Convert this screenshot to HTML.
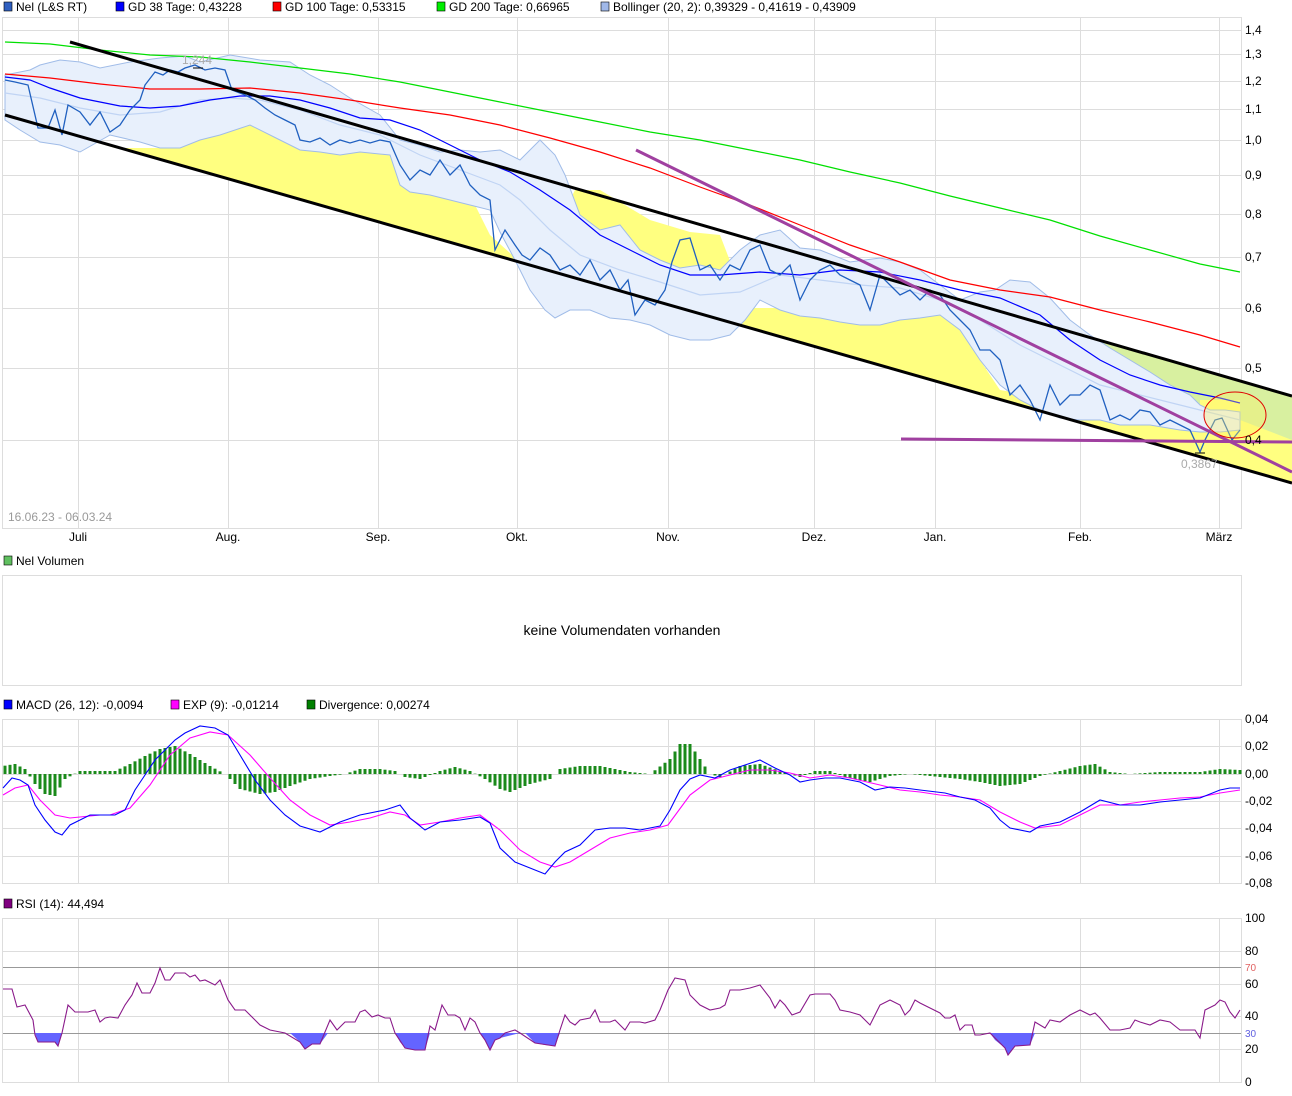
<!DOCTYPE html>
<html><head><meta charset="utf-8"><style>
body{margin:0;background:#fff;width:1292px;height:1096px;overflow:hidden;font-family:"Liberation Sans",sans-serif}
svg{display:block}
text{font-family:"Liberation Sans",sans-serif;font-size:12px;fill:#000}
</style></head><body>
<svg width="1292" height="1096" viewBox="0 0 1292 1096">
<g>
<rect x="4" y="2" width="8" height="9" fill="#3060c0" stroke="#000" stroke-width="0.6"/><text x="16" y="11">Nel (L&amp;S RT)</text>
<rect x="116" y="2" width="8" height="9" fill="#0000ff" stroke="#000" stroke-width="0.6"/><text x="128" y="11">GD 38 Tage: 0,43228</text>
<rect x="273" y="2" width="8" height="9" fill="#ff0000" stroke="#000" stroke-width="0.6"/><text x="285" y="11">GD 100 Tage: 0,53315</text>
<rect x="437" y="2" width="8" height="9" fill="#00ee00" stroke="#000" stroke-width="0.6"/><text x="449" y="11">GD 200 Tage: 0,66965</text>
<rect x="601" y="2" width="8" height="9" fill="#a0b8e8" stroke="#000" stroke-width="0.6"/><text x="613" y="11">Bollinger (20, 2): 0,39329 - 0,41619 - 0,43909</text>
</g>
<rect x="2.5" y="17.5" width="1239" height="511" fill="#fff" stroke="#ddd"/>
<g stroke="#ddd" stroke-width="1">
<line x1="3" x2="1241" y1="30.5" y2="30.5"/><line x1="3" x2="1241" y1="54.5" y2="54.5"/><line x1="3" x2="1241" y1="81.5" y2="81.5"/><line x1="3" x2="1241" y1="109.5" y2="109.5"/><line x1="3" x2="1241" y1="140.5" y2="140.5"/><line x1="3" x2="1241" y1="175.5" y2="175.5"/><line x1="3" x2="1241" y1="214.5" y2="214.5"/><line x1="3" x2="1241" y1="257.5" y2="257.5"/><line x1="3" x2="1241" y1="308.5" y2="308.5"/><line x1="3" x2="1241" y1="368.5" y2="368.5"/><line x1="3" x2="1241" y1="440.5" y2="440.5"/>
<line x1="78.5" x2="78.5" y1="18" y2="528"/><line x1="228.5" x2="228.5" y1="18" y2="528"/><line x1="378.5" x2="378.5" y1="18" y2="528"/><line x1="517.5" x2="517.5" y1="18" y2="528"/><line x1="668.5" x2="668.5" y1="18" y2="528"/><line x1="814.5" x2="814.5" y1="18" y2="528"/><line x1="935.5" x2="935.5" y1="18" y2="528"/><line x1="1080.5" x2="1080.5" y1="18" y2="528"/><line x1="1219.5" x2="1219.5" y1="18" y2="528"/>
</g>
<polygon points="1060,330 1292,396 1292,440 1240,440 1200,420 1150,390 1090,370" fill="#d8f0a0"/>
<polygon points="1240,440 1292,440 1292,475 1240,458" fill="#ffd8c0"/>
<polygon fill="#ffff80" points="115,148 180,148 210,120 240,105 262,105 300,140 390,148 410,178 470,195 490,235 520,262 560,220 575,190 600,190 650,220 690,232 720,235 745,300 748,308 930,308 960,330 1000,390 1060,400 1090,405 1110,420 1150,425 1200,430 1240,420 1292,440 1292,483 5,115"/>
<polygon points="1200,400 1240,400 1240,440 1200,440" fill="#ffff80"/>
<polygon fill="#e8f0fc" stroke="#a0bce8" stroke-width="1" points="5,75 30,70 40,65 60,60 80,62 100,68 130,62 160,58 185,56 200,62 230,55 260,60 290,62 310,75 330,85 350,98 380,115 400,140 420,145 440,152 460,150 480,152 500,150 520,160 540,140 555,155 565,175 580,215 600,230 620,225 640,250 660,260 680,268 700,265 720,270 740,250 760,235 780,230 800,248 820,250 850,262 880,258 900,262 920,270 940,285 960,300 980,292 995,290 1010,280 1030,282 1050,298 1070,320 1090,335 1110,348 1130,360 1150,372 1170,385 1190,395 1200,405 1210,410 1225,410 1240,412 1240,430 1220,432 1200,432 1180,430 1150,425 1120,425 1100,420 1080,420 1060,418 1040,410 1020,400 1000,385 980,360 960,330 940,315 920,318 900,320 880,325 860,325 840,322 820,318 800,316 780,310 760,300 745,320 730,335 710,340 690,340 670,335 650,325 630,320 610,318 590,310 570,310 555,318 545,310 530,290 515,260 500,232 490,210 470,205 450,200 430,195 410,192 400,185 390,155 360,152 340,155 320,152 300,150 280,140 250,125 220,135 200,140 180,148 160,148 140,142 110,135 80,152 60,145 40,142 20,130 5,120"/>
<polyline fill="none" stroke="#c0d4f4" stroke-width="1.2" points="5,93 40,98 80,108 120,115 160,112 200,100 230,98 260,100 300,110 340,125 380,135 420,155 460,170 500,185 520,200 550,230 580,255 620,270 660,282 700,295 740,292 780,275 820,280 860,285 900,288 940,300 980,320 1020,345 1060,365 1100,385 1140,395 1180,405 1240,420"/>
<polyline fill="none" stroke="#00e000" stroke-width="1.2" points="5,42 50,44 100,50 150,55 200,57 250,62 300,68 350,74 400,82 450,92 500,102 550,112 600,122 650,132 700,140 750,150 800,160 850,172 900,183 950,196 1000,208 1050,220 1100,236 1150,250 1200,264 1240,272"/>
<polyline fill="none" stroke="#ff0000" stroke-width="1.2" points="5,74 50,78 100,84 150,89 200,89 250,88 300,93 350,100 400,108 450,115 500,125 550,138 600,152 650,168 700,187 750,205 800,225 850,245 900,262 950,280 1000,290 1050,297 1100,310 1150,322 1200,335 1240,347"/>
<polyline fill="none" stroke="#0000ff" stroke-width="1.2" points="5,77 30,80 50,88 80,98 120,106 150,108 180,106 210,100 240,96 270,96 300,100 330,108 360,118 390,120 420,130 450,145 480,160 510,172 540,190 570,210 600,235 630,250 660,265 690,275 720,275 760,272 800,275 840,270 880,272 920,280 960,290 1000,298 1040,315 1070,340 1100,360 1130,375 1160,385 1190,392 1220,398 1240,403"/>
<polyline fill="none" stroke="#2060c0" stroke-width="1.3" points="5,80 15,82 28,85 38,128 48,128 55,110 62,135 68,105 80,112 90,125 100,112 110,132 120,125 130,110 140,100 145,85 155,72 163,75 170,70 178,72 185,68 195,65 205,70 215,68 225,70 232,90 245,95 255,100 265,108 275,115 285,120 295,125 300,140 310,142 320,138 330,145 340,140 350,143 360,140 370,143 380,140 390,142 400,165 410,180 420,170 430,175 440,160 450,175 460,165 470,185 480,195 490,200 495,250 505,230 515,245 522,255 530,260 540,248 550,255 560,270 570,265 580,275 590,260 600,280 610,270 620,290 628,280 635,315 645,300 655,305 665,290 672,262 680,240 690,238 700,270 710,265 720,280 730,265 740,270 750,250 760,245 770,270 780,275 790,265 800,300 810,280 820,270 830,265 840,275 850,280 860,285 870,310 880,275 890,285 900,295 910,290 920,300 930,290 940,295 950,310 960,320 970,330 980,350 990,350 1000,360 1010,395 1020,385 1030,400 1040,420 1050,385 1060,405 1070,395 1080,395 1090,385 1100,390 1110,420 1120,415 1130,420 1140,410 1150,412 1160,425 1170,420 1180,425 1190,430 1200,452 1205,440 1215,420 1222,418 1232,440 1240,430"/>
<line x1="70" y1="42" x2="1292" y2="396" stroke="#000" stroke-width="3"/>
<line x1="5" y1="115" x2="1292" y2="483" stroke="#000" stroke-width="3"/>
<line x1="636" y1="150" x2="1292" y2="472" stroke="#a040a0" stroke-width="3"/>
<line x1="901" y1="439" x2="1292" y2="442" stroke="#a040a0" stroke-width="3"/>
<ellipse cx="1235" cy="415" rx="31" ry="23" fill="rgba(255,240,100,0.35)" stroke="#e00000" stroke-width="1"/>
<text x="182" y="64" style="fill:#aaa">1,244</text>
<line x1="193" y1="68" x2="203" y2="68" stroke="#000"/>
<text x="1181" y="468" style="fill:#aaa">0,3867</text>
<line x1="1195" y1="453" x2="1205" y2="453" stroke="#000"/>
<text x="8" y="521" style="fill:#999">16.06.23 - 06.03.24</text>
<g>
<text x="1245" y="34">1,4</text><text x="1245" y="58">1,3</text><text x="1245" y="85">1,2</text><text x="1245" y="113">1,1</text><text x="1245" y="144">1,0</text><text x="1245" y="179">0,9</text><text x="1245" y="218">0,8</text><text x="1245" y="261">0,7</text><text x="1245" y="312">0,6</text><text x="1245" y="372">0,5</text><text x="1245" y="444">0,4</text>
</g>
<g text-anchor="middle">
<text x="78" y="541">Juli</text><text x="228" y="541">Aug.</text><text x="378" y="541">Sep.</text><text x="517" y="541">Okt.</text><text x="668" y="541">Nov.</text><text x="814" y="541">Dez.</text><text x="935" y="541">Jan.</text><text x="1080" y="541">Feb.</text><text x="1219" y="541">März</text>
</g>
<rect x="4" y="556" width="8" height="9" fill="#60c060" stroke="#000" stroke-width="0.6"/><text x="16" y="565">Nel Volumen</text>
<rect x="2.5" y="575.5" width="1239" height="110" fill="#fff" stroke="#ddd"/>
<text x="622" y="635" text-anchor="middle" style="font-size:14px">keine Volumendaten vorhanden</text>
<rect x="4" y="700" width="8" height="9" fill="#0000ff" stroke="#000" stroke-width="0.6"/><text x="16" y="709">MACD (26, 12): -0,0094</text>
<rect x="171" y="700" width="8" height="9" fill="#ff00ff" stroke="#000" stroke-width="0.6"/><text x="183" y="709">EXP (9): -0,01214</text>
<rect x="307" y="700" width="8" height="9" fill="#008000" stroke="#000" stroke-width="0.6"/><text x="319" y="709">Divergence: 0,00274</text>
<rect x="2.5" y="719.5" width="1239" height="164" fill="#fff" stroke="#ddd"/>
<g stroke="#ddd">
<line x1="3" x2="1241" y1="746.5" y2="746.5"/><line x1="3" x2="1241" y1="774.5" y2="774.5"/><line x1="3" x2="1241" y1="801.5" y2="801.5"/><line x1="3" x2="1241" y1="828.5" y2="828.5"/><line x1="3" x2="1241" y1="856.5" y2="856.5"/>
<line x1="78.5" x2="78.5" y1="720" y2="883"/><line x1="228.5" x2="228.5" y1="720" y2="883"/><line x1="378.5" x2="378.5" y1="720" y2="883"/><line x1="517.5" x2="517.5" y1="720" y2="883"/><line x1="668.5" x2="668.5" y1="720" y2="883"/><line x1="814.5" x2="814.5" y1="720" y2="883"/><line x1="935.5" x2="935.5" y1="720" y2="883"/><line x1="1080.5" x2="1080.5" y1="720" y2="883"/><line x1="1219.5" x2="1219.5" y1="720" y2="883"/>
</g>
<g id="hist" stroke="#1a8a1a" stroke-width="3"></g>
<polyline fill="none" stroke="#ff00ff" stroke-width="1.1" points="3,795 15,788 28,785 40,800 55,815 70,818 90,816 100,815 110,815 130,808 150,785 170,755 190,738 210,732 228,735 250,755 270,778 290,800 310,815 330,825 350,822 370,818 390,812 405,815 420,825 440,822 460,818 480,815 500,830 520,850 540,862 555,867 570,862 590,850 610,838 630,833 650,830 668,825 690,795 710,780 730,775 750,770 770,770 790,773 810,778 830,775 850,778 880,785 900,790 920,792 940,795 960,797 980,800 1000,812 1020,822 1035,828 1060,825 1080,815 1100,805 1120,805 1140,802 1160,800 1180,798 1200,797 1220,793 1240,790"/>
<polyline fill="none" stroke="#0000ff" stroke-width="1.1" points="3,788 12,778 20,780 28,785 35,805 45,820 55,832 62,835 70,825 80,820 90,815 100,815 115,815 125,810 135,790 145,775 155,760 165,750 175,740 185,733 200,726 215,728 228,735 240,755 255,780 270,800 285,815 300,826 320,832 340,822 360,815 385,810 400,805 410,818 425,830 440,822 460,820 480,817 490,823 500,848 515,862 530,868 545,874 555,862 565,852 580,845 595,830 610,828 625,828 640,830 660,826 670,810 680,790 690,779 700,775 715,778 730,770 745,765 760,760 775,768 790,775 800,782 810,780 825,778 840,778 860,782 875,790 890,787 905,788 920,790 945,793 960,797 975,800 990,808 1000,820 1010,828 1030,832 1040,826 1060,822 1080,812 1100,800 1120,805 1140,805 1160,802 1180,800 1200,798 1220,790 1230,788 1240,788"/>
<g>
<text x="1245" y="723">0,04</text><text x="1245" y="750">0,02</text><text x="1245" y="778">0,00</text><text x="1245" y="805">-0,02</text><text x="1245" y="832">-0,04</text><text x="1245" y="860">-0,06</text><text x="1245" y="887">-0,08</text>
</g>
<rect x="4" y="899" width="8" height="9" fill="#800080" stroke="#000" stroke-width="0.6"/><text x="16" y="908">RSI (14): 44,494</text>
<rect x="2.5" y="918.5" width="1239" height="164" fill="#fff" stroke="#ddd"/>
<g stroke="#ddd">
<line x1="3" x2="1241" y1="951.5" y2="951.5"/><line x1="3" x2="1241" y1="984.5" y2="984.5"/><line x1="3" x2="1241" y1="1016.5" y2="1016.5"/><line x1="3" x2="1241" y1="1049.5" y2="1049.5"/>
<line x1="78.5" x2="78.5" y1="919" y2="1082"/><line x1="228.5" x2="228.5" y1="919" y2="1082"/><line x1="378.5" x2="378.5" y1="919" y2="1082"/><line x1="517.5" x2="517.5" y1="919" y2="1082"/><line x1="668.5" x2="668.5" y1="919" y2="1082"/><line x1="814.5" x2="814.5" y1="919" y2="1082"/><line x1="935.5" x2="935.5" y1="919" y2="1082"/><line x1="1080.5" x2="1080.5" y1="919" y2="1082"/><line x1="1219.5" x2="1219.5" y1="919" y2="1082"/>
</g>
<line x1="3" x2="1241" y1="967.5" y2="967.5" stroke="#999"/>
<line x1="3" x2="1241" y1="1033.5" y2="1033.5" stroke="#999"/>
<g fill="#6464ff">
<polygon points="35,1033 38,1042 55,1042 58,1046 62,1033"/>
<polygon points="290,1033 300,1042 305,1049 312,1044 320,1044 328,1033"/>
<polygon points="395,1033 400,1042 405,1048 415,1050 425,1050 430,1033"/>
<polygon points="480,1033 485,1040 490,1050 495,1040 500,1038 520,1033"/>
<polygon points="525,1033 535,1043 545,1045 555,1046 560,1033"/>
<polygon points="990,1033 995,1040 1005,1048 1008,1055 1015,1046 1030,1045 1035,1033"/>
</g>
<polyline fill="none" stroke="#8a1a8a" stroke-width="1.1" points="3,989 12,989 17,1007 25,1005 33,1020 35,1035 38,1042 55,1042 58,1046 62,1033 68,1005 75,1012 88,1012 95,1010 100,1022 105,1018 110,1017 118,1018 125,1005 132,995 137,983 142,993 150,993 155,983 160,968 165,980 170,980 175,973 185,973 190,977 195,975 200,981 205,980 215,985 220,980 228,1000 235,1010 245,1010 255,1020 260,1025 270,1030 285,1033 300,1042 305,1049 312,1044 320,1044 330,1020 337,1030 345,1022 355,1022 360,1012 365,1010 372,1017 378,1015 385,1018 390,1018 395,1033 405,1048 415,1050 425,1050 430,1026 435,1030 442,1005 448,1015 455,1015 460,1018 465,1030 470,1018 475,1022 480,1033 485,1040 490,1050 495,1040 500,1038 505,1033 515,1030 520,1033 535,1043 555,1046 560,1030 565,1015 570,1022 575,1025 580,1020 590,1018 595,1010 600,1022 610,1022 615,1020 625,1030 630,1022 640,1022 645,1023 655,1020 660,1010 668,990 675,978 685,980 690,995 700,1005 710,1010 720,1008 725,1005 730,990 740,990 750,988 760,985 770,998 775,1008 780,1000 785,1005 792,1015 800,1012 810,995 815,994 830,994 835,1000 840,1010 850,1012 860,1015 870,1025 880,1005 890,1000 900,1005 905,1015 910,1010 915,1000 920,1003 930,1008 940,1013 945,1018 950,1018 955,1015 960,1030 965,1025 972,1025 975,1035 980,1035 990,1033 1005,1048 1008,1055 1015,1046 1030,1045 1035,1022 1045,1028 1050,1020 1060,1022 1070,1015 1080,1010 1090,1015 1095,1013 1100,1018 1110,1030 1120,1030 1130,1028 1135,1020 1140,1022 1150,1025 1160,1020 1170,1022 1180,1030 1190,1030 1195,1030 1200,1038 1205,1010 1215,1005 1220,1000 1225,1002 1230,1012 1235,1018 1240,1010"/>
<g>
<text x="1245" y="922">100</text><text x="1245" y="955">80</text><text x="1245" y="971" style="font-size:10px;fill:#e06060">70</text><text x="1245" y="988">60</text><text x="1245" y="1020">40</text><text x="1245" y="1037" style="font-size:10px;fill:#6060e0">30</text><text x="1245" y="1053">20</text><text x="1245" y="1086">0</text>
</g>
</svg>
<script>
(function(){
var k=[[3,8],[15,10],[25,5],[35,-10],[45,-20],[55,-22],[65,-5],[80,3],[100,3],[115,3],[130,10],[145,18],[160,25],[175,28],[190,20],[210,8],[225,0],[240,-15],[260,-20],[275,-18],[290,-12],[310,-5],[330,-2],[345,0],[360,5],[380,5],[395,3],[405,-3],[420,-5],[440,3],[455,7],[470,3],[485,-5],[500,-15],[510,-18],[530,-10],[550,-5],[560,5],[580,8],[600,8],[615,5],[630,2],[650,0],[670,15],[680,30],[690,30],[700,15],[710,0],[720,-3],[740,8],[760,10],[780,3],[800,-3],[815,3],[830,3],[845,-3],[870,-8],[890,-2],[910,0],[940,-3],[960,-5],[980,-8],[1000,-12],[1020,-10],[1040,-2],[1060,3],[1080,8],[1095,10],[1110,2],[1130,0],[1160,2],[1200,2],[1220,5],[1240,4]];
function f(x){for(var i=0;i<k.length-1;i++){if(x>=k[i][0]&&x<=k[i+1][0]){var t=(x-k[i][0])/(k[i+1][0]-k[i][0]);return k[i][1]+t*(k[i+1][1]-k[i][1]);}}return 4;}
var g=document.getElementById('hist');
for(var x=5;x<=1240;x+=5){var v=f(x);
var l=document.createElementNS('http://www.w3.org/2000/svg','line');
l.setAttribute('x1',x);l.setAttribute('x2',x);l.setAttribute('y1',774);l.setAttribute('y2',774-v);g.appendChild(l);}
})();
</script>
</body></html>
